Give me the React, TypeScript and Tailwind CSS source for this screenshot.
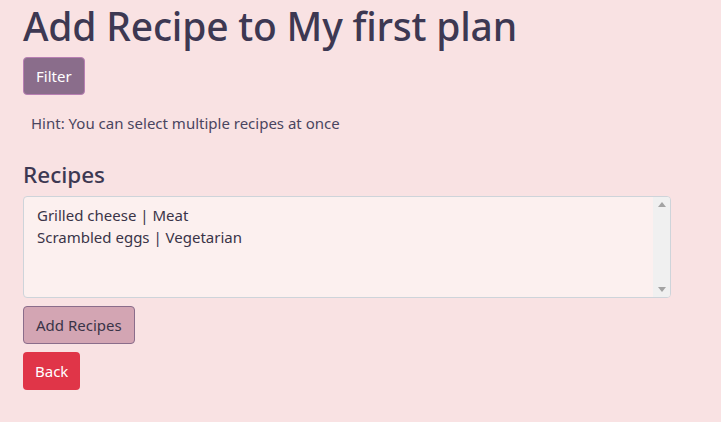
import React from 'react';

const recipes = ['Grilled cheese | Meat', 'Scrambled eggs | Vegetarian'];

const RecipeList: React.FC = () => (
  <div className="flex w-[648px] h-[102px] rounded-[4px] border border-[#ced4da] bg-[#fcf0ef] overflow-hidden">
    <ul className="flex-1 pl-[13px] pt-[7px] text-[15px] leading-[22px] text-[#3a3448]">
      {recipes.map((r) => (
        <li key={r}>{r}</li>
      ))}
    </ul>
    <div className="w-[17px] bg-[#f0f0f0] flex flex-col items-center justify-between py-[5px]">
      <svg width="8" height="5" viewBox="0 0 8 5">
        <path d="M4 0 L8 5 L0 5 Z" fill="#a3a3a3" />
      </svg>
      <svg width="8" height="5" viewBox="0 0 8 5">
        <path d="M0 0 L8 0 L4 5 Z" fill="#a3a3a3" />
      </svg>
    </div>
  </div>
);

export default function App() {
  return (
    <div
      className="min-h-[422px] bg-[#f9e2e3] px-[23px] text-[#3d3a55]"
      style={{ fontFamily: '"Noto Sans", "Open Sans", sans-serif' }}
    >
      <h1 className="pt-[2px] text-[39px] leading-[48px] tracking-[-0.2px] font-medium mb-[7px] text-[#3d3852]">
        Add Recipe to My first plan
      </h1>
      <button className="h-[38px] px-[12px] rounded-[4px] bg-[#8a6d8b] border border-[#b87fb3] text-white text-[15px]">
        Filter
      </button>
      <p className="mt-[16px] ml-[8px] text-[15px] leading-[24px] text-[#4a4560]">
        Hint: You can select multiple recipes at once
      </p>
      <h4 className="mt-[26px] mb-[7px] text-[22.5px] leading-[28px] font-medium text-[#3d3852]">
        Recipes
      </h4>
      <RecipeList />
      <div className="flex flex-col items-start gap-[8px] mt-[8px]">
        <button className="h-[38px] px-[12px] rounded-[4px] bg-[#d3a5b3] border border-[#8a6d8b] text-[#3a3448] text-[15px]">
          Add Recipes
        </button>
        <button className="h-[38px] px-[12px] rounded-[4px] bg-[#e03548] text-white text-[15px]">
          Back
        </button>
      </div>
    </div>
  );
}
